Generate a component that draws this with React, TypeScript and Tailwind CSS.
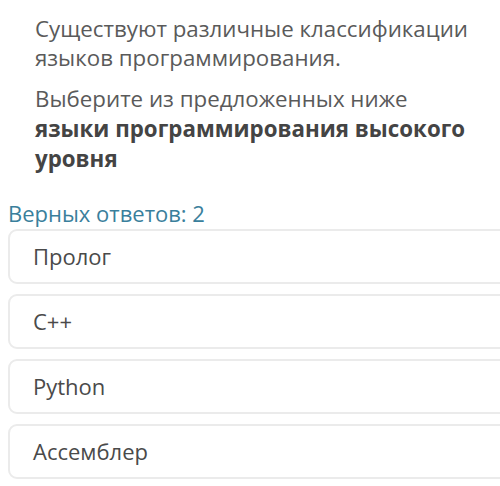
import React from "react";

const options = ["Пролог", "C++", "Python", "Ассемблер"];

export default function App() {
  return (
    <div
      className="w-[500px] h-[486px] overflow-hidden bg-white"
      style={{ fontFamily: '"Open Sans", "Noto Sans", sans-serif' }}
    >
      <div className="pl-[35px] w-[475px] pt-[14px]">
        <p className="text-[22.3px] leading-[29px] text-[#5a5a5a]">
          Существуют различные классификации языков программирования.
        </p>
        <p className="mt-[12px] text-[22.3px] leading-[30px] text-[#5a5a5a]">
          Выберите из предложенных ниже{" "}
          <b className="font-bold text-[#444]">языки программирования высокого уровня</b>
        </p>
      </div>
      <div className="mt-[27px] pl-[8px] text-[22px] leading-[24px] text-[#3a7f9c]">
        Верных ответов: 2
      </div>
      <div className="mt-[4px] ml-[8px] mr-[-20px] flex flex-col gap-[10px]">
        {options.map((o) => (
          <div
            key={o}
            className="h-[55px] rounded-[9px] border-2 border-[#ebebeb] bg-white flex items-center pl-[23px] text-[22px] text-[#4a4a4a]"
          >
            {o}
          </div>
        ))}
      </div>
    </div>
  );
}
